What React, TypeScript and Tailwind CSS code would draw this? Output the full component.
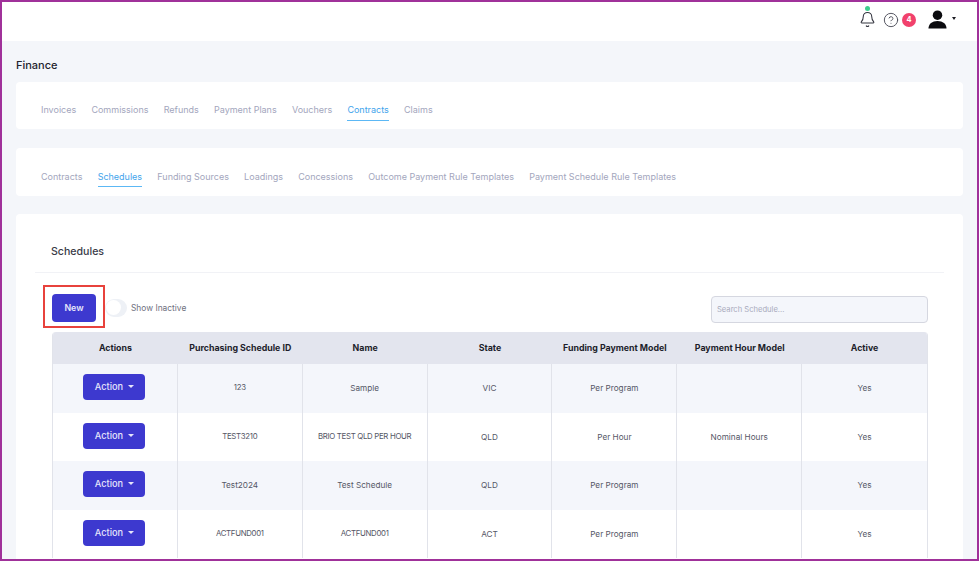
import React from 'react';
import { Bell, CircleHelp } from 'lucide-react';

const financeTabs = ['Invoices', 'Commissions', 'Refunds', 'Payment Plans', 'Vouchers', 'Contracts', 'Claims'];
const contractTabs = [
  'Contracts',
  'Schedules',
  'Funding Sources',
  'Loadings',
  'Concessions',
  'Outcome Payment Rule Templates',
  'Payment Schedule Rule Templates',
];
const columns = ['Actions', 'Purchasing Schedule ID', 'Name', 'State', 'Funding Payment Model', 'Payment Hour Model', 'Active'];
const rows = [
  { id: '123', name: 'Sample', state: 'VIC', funding: 'Per Program', hour: '', active: 'Yes' },
  { id: 'TEST3210', name: 'BRIO TEST QLD PER HOUR', state: 'QLD', funding: 'Per Hour', hour: 'Nominal Hours', active: 'Yes' },
  { id: 'Test2024', name: 'Test Schedule', state: 'QLD', funding: 'Per Program', hour: '', active: 'Yes' },
  { id: 'ACTFUND001', name: 'ACTFUND001', state: 'ACT', funding: 'Per Program', hour: '', active: 'Yes' },
];

const Tabs = ({ items, active }: { items: string[]; active: string }) => (
  <div className="flex h-full gap-[15.2px]">
    {items.map((tab) => (
      <div
        key={tab}
        className={
          tab === active
            ? 'border-b border-[#5cb8f5] text-[9px] leading-[18px] text-[#3fa4ec]'
            : 'text-[9px] leading-[18px] text-[#a3a6bd]'
        }
      >
        {tab}
      </div>
    ))}
  </div>
);

const Cell = ({ children, tight }: { children?: React.ReactNode; tight?: boolean }) => (
  <div
    className={
      tight
        ? 'flex items-center justify-center border-r border-[#e1e3ea] text-[7.8px] tracking-[-0.3px] text-[#555766] last:border-r-0'
        : 'flex items-center justify-center border-r border-[#e1e3ea] text-[8.2px] text-[#555766] last:border-r-0'
    }
  >
    {children}
  </div>
);

export default function App() {
  return (
    <div className="h-[561px] w-[979px] overflow-hidden border-2 border-[#a0319a] bg-[#f4f6fa] font-['Inter',sans-serif]">
      <header className="flex h-[39px] items-center justify-end bg-white pr-[21px]">
        <div className="relative mb-[4px] mr-[7px]">
          <span className="absolute left-[6px] top-[-5.5px] h-[5px] w-[5px] rounded-full bg-[#3ecf8e]" />
          <Bell size={17} strokeWidth={1.5} className="text-[#33343f]" />
        </div>
        <CircleHelp size={16} strokeWidth={1.4} className="mb-[3px] mr-[3px] text-[#4a4b57]" />
        <div className="mb-[3px] mr-[12px] flex h-[14px] w-[14px] items-center justify-center rounded-full bg-[#f1416c] text-[7.5px] font-bold text-white">
          4
        </div>
        <svg width="19" height="19" viewBox="0 0 20 19" className="mb-[4px]">
          <circle cx="10" cy="5" r="5" fill="#0b0b0f" />
          <path d="M0.5 19c0-5 4-8 9.5-8s9.5 3 9.5 8z" fill="#0b0b0f" />
        </svg>
        <div className="mb-[7px] ml-[5px] h-0 w-0 border-x-[2.5px] border-t-[3px] border-x-transparent border-t-[#1b1b22]" />
      </header>

      <main className="px-[14px]">
        <h1 className="mt-[16px] h-[25px] text-[11px] font-medium leading-[16px] text-[#23242e]">Finance</h1>

        <section className="h-[47px] rounded-[4px] bg-white pb-[8px] pl-[25px] pt-[19px]">
          <Tabs items={financeTabs} active="Contracts" />
        </section>

        <section className="mt-[19px] h-[48px] rounded-[4px] bg-white pb-[9px] pl-[25px] pt-[20px]">
          <Tabs items={contractTabs} active="Schedules" />
        </section>

        <section className="mt-[18px] h-[400px] rounded-[4px] bg-white px-[19px]">
          <div className="flex h-[59px] items-center border-b border-[#f1f2f6] pl-[16px] pt-[18px]">
            <h2 className="text-[10.6px] font-medium text-[#3a3b48]">Schedules</h2>
          </div>

          <div className="ml-[17px] mr-[16px]">
            <div className="flex h-[59px] items-center pt-[10px]">
              <div className="relative">
                <button className="h-[28px] w-[44px] rounded-[4px] bg-[#3d39cf] text-[8.8px] font-semibold text-[#e6e6fb]">
                  New
                </button>
                <div className="absolute left-[-9px] top-[-8px] h-[43px] w-[62px] border-[2px] border-[#e8423c]" />
              </div>
              <div className="ml-[9px] flex h-[18px] w-[22px] items-center rounded-full bg-[#eef1f6]">
                <div className="ml-[1px] h-[15px] w-[15px] rounded-full bg-white" />
              </div>
              <span className="ml-[4px] mt-[2px] text-[8.4px] text-[#6f7180]">Show Inactive</span>
              <input
                placeholder="Search Schedule..."
                className="ml-auto mt-[3px] h-[27px] w-[217px] rounded-[4px] border border-[#d5d7e0] bg-[#f4f6fb] px-[5px] text-[7.6px] placeholder:text-[#a9abbd]"
              />
            </div>

            <div className="overflow-hidden rounded-t-[4px] border-x border-[#e1e3ea]">
              <div className="grid h-[32px] grid-cols-7 items-center bg-[#e3e5ee]">
                {columns.map((col) => (
                  <div key={col} className="text-center text-[8.8px] font-bold text-[#1d1e2b]">
                    {col}
                  </div>
                ))}
              </div>
              {rows.map((row, i) => (
                <div key={row.id} className={i % 2 === 0 ? 'grid h-[48.5px] grid-cols-7 bg-[#f4f6fb]' : 'grid h-[48.5px] grid-cols-7 bg-white'}>
                  <Cell>
                    <button className="mb-[2px] mr-[1px] flex h-[26px] w-[62px] items-center justify-center gap-[5px] rounded-[4px] bg-[#3d39cf] text-[9.2px] font-medium text-[#e6e6fb]">
                      Action
                      <span className="mb-[1px] h-0 w-0 border-x-[3px] border-t-[3px] border-x-transparent border-t-[#e6e6fb]" />
                    </button>
                  </Cell>
                  <Cell tight={row.id === row.id.toUpperCase()}>{row.id}</Cell>
                  <Cell tight={row.name === row.name.toUpperCase()}>{row.name}</Cell>
                  <Cell>{row.state}</Cell>
                  <Cell>{row.funding}</Cell>
                  <Cell>{row.hour}</Cell>
                  <Cell>{row.active}</Cell>
                </div>
              ))}
            </div>
          </div>
        </section>
      </main>
    </div>
  );
}
